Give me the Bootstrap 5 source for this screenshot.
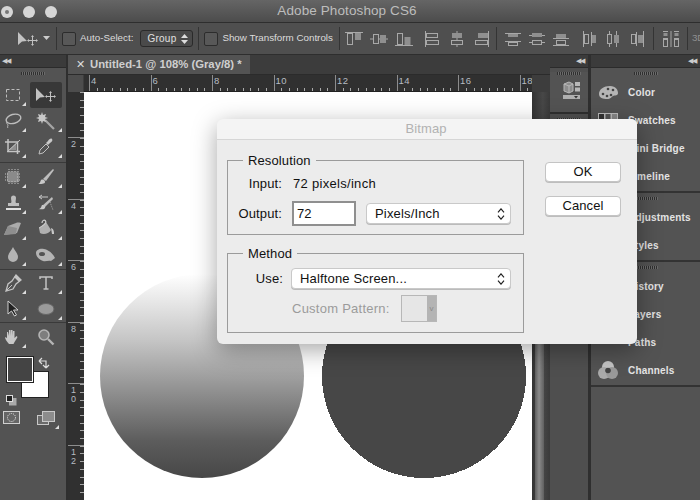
<!DOCTYPE html>
<html lang="en">
<head>
<meta charset="utf-8">
<title>Adobe Photoshop CS6</title>
<link rel="stylesheet" href="https://cdn.jsdelivr.net/npm/bootstrap@5.3.0/dist/css/bootstrap.min.css">
<style>
html,body{margin:0;background:#4b4b4b;}
body{width:700px;height:500px;overflow:hidden;position:relative;font-family:"Liberation Sans",Arial,sans-serif;color:#ddd;}
svg{display:block;flex:none;}
.ps-title{height:22px;background:linear-gradient(#656565,#4c4c4c);}
.ps-title-text{flex:1;text-align:center;font-size:13.5px;letter-spacing:.1px;color:#bdbdbd;padding-right:6px;line-height:22px;}
.ps-light{width:12px;height:12px;border-radius:50%;background:#d6d6d6;}
.ps-lights{position:absolute;left:1px;top:6px;gap:10px;}
.ps-dot{width:4px;height:4px;border-radius:50%;background:#777;margin:4px;}
.ps-opts{height:33px;background:#4f4f4f;border-top:1px solid #2e2e2e;border-bottom:1px solid #2e2e2e;padding-left:17px;font-size:9.8px;color:#dcdcdc;white-space:nowrap;}
.ps-vsep{width:1px;height:23px;background:#343434;flex:none;}
.ps-check{width:14px;height:14px;border:1px solid #2c2c2c;border-radius:2px;background:#585858;flex:none;}
.ps-sel{width:53px;height:17px;border:1px solid #2a2a2a;border-radius:3px;background:#4a4a4a;padding:0 0 0 6px;font-size:10px;line-height:15px;color:#e0e0e0;letter-spacing:.26px;flex:none;}
.ps-work{height:445px;}
.ps-tools{width:66px;background:#535353;flex:none;}
.ps-strip{height:13px;background:#3b3b3b;border-bottom:1px solid #2b2b2b;color:#ccc;font-size:7px;line-height:12px;letter-spacing:-1px;}
.ps-grip{height:3px;width:24px;margin:4px auto 0;background:repeating-linear-gradient(90deg,#2f2f2f 0 1px,#6b6b6b 1px 2px);}
.ps-toolgrp{display:grid;grid-template-columns:26px 32px;column-gap:4px;grid-auto-rows:26px;padding-left:0;}
.ps-toolgrp + .ps-toolgrp{border-top:1px solid #3a3a3a;}
.ps-tool{position:relative;display:flex;align-items:center;justify-content:center;}
.ps-tool.on{background:#383838;border-radius:2px;}
.ps-tool.fly::after{content:"";position:absolute;right:0;bottom:2px;border-style:solid;border-width:0 0 4px 4px;border-color:transparent transparent #ddd transparent;}
.ps-gap{width:2px;background:#2f2f2f;flex:none;}
.ps-doc{width:482px;flex:none;background:#3a3a3a;}
.ps-tabs{height:20px;background:#3c3c3c;border-bottom:1px solid #2b2b2b;}
.ps-tab{width:182px;background:#535353;font-size:11.3px;font-weight:700;color:#cfcfcf;line-height:19px;padding-left:8px;gap:5px;white-space:nowrap;}
.ps-x{font-size:11px;font-weight:400;color:#ddd;}
.ps-hrow{height:17px;background:#303030;}
.ps-corner{width:16px;flex:none;background:#4d4d4d;border-right:1px solid #3e3e3e;}
.ps-hrule{width:448px;flex:none;overflow:hidden;padding-left:5px;border-bottom:1px solid #222;background:repeating-linear-gradient(90deg,#aaa 0 1px,transparent 1px 7.69px) 5px bottom/100% 3px no-repeat;}
.ps-hcell{width:61.5px;flex:none;border-left:1px solid #8d8d8d;font-size:9.5px;line-height:12px;padding-left:1px;color:#b6bcc2;letter-spacing:.4px;}
.ps-hend{flex:1;background:#3d3d3d;}
.ps-body{flex:1;min-height:0;}
.ps-vrule{width:16px;flex:none;overflow:hidden;padding-top:45px;background:#303030 repeating-linear-gradient(180deg,#a5a5a5 0 1px,transparent 1px 7.69px) right 0/4px 100% no-repeat;}
.ps-vcell{height:61.5px;border-top:1px solid #8d8d8d;font-size:9px;line-height:9px;color:#b6bcc2;padding:2px 0 0 3px;}
.ps-canvas{width:448px;flex:none;background:#fff;padding:182px 0 0 16px;gap:18px;overflow:hidden;}
.ps-round{width:204px;height:204px;border-radius:50%;flex:none;}
.ps-grad{background:linear-gradient(#fff 0%,#c6c6c6 32%,#8f8f8f 58%,#5c5c5c 82%,#474747 100%);}
.ps-scroll{flex:1;background:linear-gradient(90deg,#333,#474747 60%,#3a3a3a);padding:40px 6px 0 3px;}
.ps-thumb{height:100%;background:linear-gradient(90deg,#5e5e5e,#8a8a8a 45%,#5f5f5f);}
.ps-col1{width:38px;flex:none;background:#4f4f4f;}
.ps-col2{flex:1;background:#535353;}
.ps-tile{height:42px;background:#535353;border-bottom:2px solid #2f2f2f;}
.ps-item{height:28px;padding-left:7px;gap:8px;font-size:10px;font-weight:700;letter-spacing:.2px;color:#e4e4e4;white-space:nowrap;}
.ps-ico{width:22px;flex:none;}
.ps-grp{border-bottom:2px solid #333;padding-bottom:1px;}
.ps-colors{position:relative;height:56px;margin-top:4px;}
.ps-fg,.ps-bg{position:absolute;width:26px;height:25px;}
.ps-bg{left:22px;top:18px;background:#fff;outline:1px solid #222;}
.ps-fg{left:7px;top:3px;background:#444;border:1px solid #fff;outline:1px solid #222;}
.ps-swap{position:absolute;left:38px;top:3px;}
.ps-def{position:absolute;left:6px;top:41px;}
.ps-modes{position:relative;height:20px;margin-top:1px;}
.ps-mask{position:absolute;left:3px;top:0;}
.ps-scr{position:absolute;left:37px;top:0;}
.ps-miniarr{position:absolute;left:55px;top:14px;border-style:solid;border-width:0 0 4px 4px;border-color:transparent transparent #ddd transparent;}
.ps-dialog{position:absolute;left:217px;top:119px;width:420px;height:225px;background:#ececec;border-radius:6px;box-shadow:0 6px 24px rgba(0,0,0,.35);color:#111;font-size:13px;letter-spacing:.12px;}
.ps-dhead{height:21px;line-height:20px;text-align:center;color:#b2b2b2;background:#f4f4f4;border-bottom:1px solid #d6d6d6;border-radius:6px 6px 0 0;font-size:13px;padding-right:2px;}
.ps-dmain{padding:13px 16px 0 10px;gap:21px;}
.ps-fset{border:1px solid #9b9b9b;padding:0;margin:0;width:297px;position:relative;}
.ps-fset legend{float:none;width:auto;font-size:13px;line-height:15px;margin:0 0 0 15px;padding:0 5px;color:#111;}
.ps-res{height:82px;margin-bottom:11px;}
.ps-meth{height:87px;}
.ps-lab{text-align:right;flex:none;}
.ps-btn{width:76px;height:20px;padding:0;font-size:13px;line-height:18px;color:#111;background:#fff;border:1px solid #c4c4c4;border-radius:4px;box-shadow:0 1px 0 #bdbdbd;letter-spacing:.12px;}
.ps-btnwrap{gap:13.500px;padding-top:9px;}
.ps-input{width:64px;height:25px;border:2px solid #8f8f8f;border-radius:0;padding:0 3px;font-size:13px;color:#111;background:#fff;box-shadow:none;letter-spacing:.12px;}
.ps-pick{height:21px;padding:0 20px 0 8px;font-size:13px;line-height:19px;color:#111;border:1px solid #c9c9c9;border-radius:4px;background-color:#fff;box-shadow:0 1px 0 #bbb;letter-spacing:.16px;background-image:url("data:image/svg+xml,%3csvg xmlns='http://www.w3.org/2000/svg' viewBox='0 0 9 14'%3e%3cpath d='M1 5l3.5-4L8 5M1 9l3.5 4L8 9' fill='none' stroke='%23222' stroke-width='1.4'/%3e%3c/svg%3e");background-position:right 5px center;background-size:8px 12px;}
.ps-dim{color:#9b9b9b;letter-spacing:.25px;}
.ps-patt{width:36px;height:27px;border:1px solid #b7b7b7;background:#e6e6e6;flex:none;}
.ps-pbar{width:9px;height:100%;margin-left:auto;background:#b4b4b4;color:#8a8a8a;font-size:8px;line-height:25px;text-align:center;}
</style>
</head>
<body>

<svg width="0" height="0" class="position-absolute">
<defs>
<symbol id="i-move" viewBox="0 0 22 16"><path d="M1 1v13l4-3.6 5-.4z" fill="#c2c2c2"/><path d="M15.500 5v9M11 9.500h9" stroke="#c2c2c2" fill="none"/><path d="M15.500 4l-1.500 2h3zM15.500 15l-1.500-2h3zM10 9.500l2-1.500v3zM21 9.500l-2-1.500v3z" fill="#c2c2c2"/></symbol>
<symbol id="al-v" viewBox="0 0 18 18"><path d="M0 2.500h18" stroke="#a8a8a8"/><rect x="2.500" y="3.500" width="5" height="11" fill="none" stroke="#a8a8a8"/><rect x="10" y="3" width="6" height="7" fill="#8f8f8f"/></symbol>
<symbol id="al-m" viewBox="0 0 18 18"><path d="M0 9h18" stroke="#a8a8a8"/><rect x="3.500" y="4.500" width="5" height="9" fill="#535353" stroke="#a8a8a8"/><rect x="10" y="5" width="6" height="8" fill="#8f8f8f"/></symbol>
<symbol id="al-b" viewBox="0 0 18 18"><path d="M0 15.500h18" stroke="#a8a8a8"/><rect x="2.500" y="3.500" width="5" height="11" fill="none" stroke="#a8a8a8"/><rect x="9.500" y="7" width="6" height="8" fill="#8f8f8f"/></symbol>
<symbol id="al-l" viewBox="0 0 18 18"><path d="M2.500 1v16" stroke="#a8a8a8"/><rect x="3.500" y="3.500" width="11" height="4" fill="#535353" stroke="#a8a8a8"/><rect x="3.500" y="10.500" width="12" height="4" fill="#535353" stroke="#a8a8a8"/></symbol>
<symbol id="al-c" viewBox="0 0 18 18"><path d="M9 1v16" stroke="#a8a8a8"/><rect x="4" y="3" width="10" height="5" fill="#8f8f8f"/><rect x="3.500" y="10.500" width="11" height="4" fill="#535353" stroke="#a8a8a8"/></symbol>
<symbol id="al-r" viewBox="0 0 18 18"><path d="M15.500 1v16" stroke="#a8a8a8"/><rect x="5" y="3" width="10" height="5" fill="#8f8f8f"/><rect x="2.500" y="10.500" width="12" height="4" fill="#535353" stroke="#a8a8a8"/></symbol>
<symbol id="d-t" viewBox="0 0 18 18"><path d="M1 3.500h16M1 11.500h16" stroke="#a8a8a8"/><rect x="4" y="4" width="10" height="3" fill="#8f8f8f"/><rect x="4.500" y="12.500" width="9" height="3" fill="none" stroke="#a8a8a8"/></symbol>
<symbol id="d-m" viewBox="0 0 18 18"><path d="M1 5.500h16M1 12.500h16" stroke="#a8a8a8"/><rect x="4" y="3" width="10" height="4" fill="#8f8f8f"/><rect x="4.500" y="10.500" width="9" height="4" fill="#535353" stroke="#a8a8a8"/></symbol>
<symbol id="d-b" viewBox="0 0 18 18"><path d="M1 8.500h16M1 15.500h16" stroke="#a8a8a8"/><rect x="4" y="4" width="10" height="4" fill="#8f8f8f"/><rect x="4.500" y="10.500" width="9" height="4" fill="none" stroke="#a8a8a8"/></symbol>
<symbol id="h-l" viewBox="0 0 18 18"><path d="M3.500 1v16M11.500 2v14" stroke="#a8a8a8"/><rect x="4.500" y="4.500" width="4" height="9" fill="none" stroke="#a8a8a8"/><rect x="12" y="5" width="4" height="8" fill="#8f8f8f"/></symbol>
<symbol id="h-c" viewBox="0 0 18 18"><path d="M5.500 1v16M12.500 1v16" stroke="#a8a8a8"/><rect x="3.500" y="4.500" width="4" height="9" fill="#535353" stroke="#a8a8a8"/><rect x="10" y="5" width="5" height="8" fill="#8f8f8f"/></symbol>
<symbol id="h-r" viewBox="0 0 18 18"><path d="M8.500 2v14M15.500 1v16" stroke="#a8a8a8"/><rect x="3.500" y="4.500" width="4" height="9" fill="none" stroke="#a8a8a8"/><rect x="10" y="5" width="5" height="8" fill="#8f8f8f"/></symbol>
</defs>
</svg>

<!-- title bar -->
<div class="ps-title d-flex">
  <div class="ps-title-text">Adobe Photoshop CS6</div>
</div>
<div class="ps-lights d-flex">
  <div class="ps-light"><div class="ps-dot"></div></div>
  <div class="ps-light"></div>
  <div class="ps-light"></div>
</div>

<!-- options bar -->
<div class="ps-opts d-flex align-items-center">
  <svg width="22" height="16"><use href="#i-move"/></svg>
  <svg width="8" height="5" style="margin-left:4px"><path d="M0 0h7l-3.500 4z" fill="#ccc"/></svg>
  <div class="ps-vsep" style="margin-left:5px"></div>
  <div class="ps-check" style="margin-left:5px"></div>
  <span class="ms-1">Auto-Select:</span>
  <div class="ps-sel d-flex align-items-center" style="margin-left:7px">Group
    <svg width="7" height="10" class="ms-auto me-1"><path d="M0 4l3.500-4 3.500 4zM0 6l3.500 4 3.500-4z" fill="#ddd"/></svg>
  </div>
  <div class="ps-vsep" style="margin-left:5px"></div>
  <div class="ps-check" style="margin-left:5px"></div>
  <span class="ms-1">Show Transform Controls</span>
  <div class="ps-vsep" style="margin-left:6px"></div>
  <div class="d-flex align-items-center" style="margin-left:5px;gap:7px">
    <svg width="18" height="18"><use href="#al-v"/></svg>
    <svg width="18" height="18"><use href="#al-m"/></svg>
    <svg width="18" height="18"><use href="#al-b"/></svg>
    <svg width="18" height="18" style="margin-left:3px"><use href="#al-l"/></svg>
    <svg width="18" height="18"><use href="#al-c"/></svg>
    <svg width="18" height="18"><use href="#al-r"/></svg>
  </div>
  <div class="ps-vsep" style="margin-left:5px"></div>
  <div class="d-flex align-items-center" style="margin-left:7px;gap:6px">
    <svg width="18" height="18"><use href="#d-t"/></svg>
    <svg width="18" height="18"><use href="#d-m"/></svg>
    <svg width="18" height="18"><use href="#d-b"/></svg>
    <svg width="18" height="18" style="margin-left:4px"><use href="#h-l"/></svg>
    <svg width="18" height="18"><use href="#h-c"/></svg>
    <svg width="18" height="18"><use href="#h-r"/></svg>
  </div>
  <div class="ps-vsep" style="margin-left:7px"></div>
  <svg width="18" height="18" style="margin-left:8px"><path d="M1 1.500h5M12 1.500h5M1 8.500h5M12 8.500h5" stroke="#a8a8a8"/><rect x="1.500" y="3" width="4" height="3" fill="#8f8f8f"/><rect x="12.500" y="3" width="4" height="3" fill="#8f8f8f"/><rect x="1.500" y="9.500" width="4" height="7" fill="none" stroke="#a8a8a8"/><rect x="12.500" y="9.500" width="4" height="7" fill="none" stroke="#a8a8a8"/><path d="M9 1v16" stroke="#a8a8a8"/></svg>
  <div class="ps-vsep" style="margin-left:7px"></div>
  <span style="margin-left:4px;color:#8f8f8f">3D</span>
</div>

<div class="ps-work d-flex">
  <!-- tools -->
  <div class="ps-tools">
    <div class="ps-strip" style="padding-left:2px">◀◀</div>
    <div class="ps-grip"></div>
    <div style="height:7px"></div>
    <div class="ps-toolgrp" style="padding-bottom:2px;">
      <div class="ps-tool fly"><svg width="16" height="16"><rect x="1.500" y="2.500" width="13" height="11" fill="none" stroke="#bdbdbd" stroke-dasharray="3 2"/></svg></div>
      <div class="ps-tool on"><svg width="22" height="16"><use href="#i-move"/></svg></div>
      <div class="ps-tool fly"><svg width="18" height="18"><ellipse cx="9.500" cy="7" rx="7.500" ry="4.500" fill="none" stroke="#bdbdbd" stroke-width="1.400" transform="rotate(-15 9 7)"/><path d="M3 10c-1 2 1 2 1 3s-1 2 0 3" fill="none" stroke="#bdbdbd"/></svg></div>
      <div class="ps-tool fly"><svg width="20" height="20"><path d="M9 9l9 9" stroke="#a5a5a5" stroke-width="2.200"/><path d="M6 1l1 3 3-1-1 3 3 1-3 1 1 3-3-1-1 3-1-3-3 1 1-3-3-1 3-1-1-3 3 1z" fill="#c8c8c8"/></svg></div>
      <div class="ps-tool fly"><svg width="18" height="18"><path d="M4 1v12.500h12M1 4h12.500v12" fill="none" stroke="#c4c4c4" stroke-width="1.500"/><path d="M5 12L12 5v7z" fill="#8f8f8f"/><path d="M3 14L16 2" stroke="#c4c4c4"/></svg></div>
      <div class="ps-tool fly"><svg width="18" height="18"><path d="M2 16l1-4 6-6 3 3-6 6z" fill="#535353" stroke="#c0c0c0"/><path d="M9 5l2-2c1-2 3-3 4-2s0 3-2 4l-2 2z" fill="#c8c8c8"/></svg></div>
    </div>
    <div class="ps-toolgrp" style="padding-top:1px;">
      <div class="ps-tool fly"><svg width="18" height="18"><rect x="3" y="3.500" width="12" height="11" rx="2" fill="#8a8a8a"/><path d="M5 1v4M8 1v4M11 1v4M14 1v4M5 13v4M8 13v4M11 13v4M14 13v4M1 6h4M1 9h4M1 12h4M13 6h4M13 9h4M13 12h4" stroke="#c4c4c4" stroke-dasharray="1 1"/></svg></div>
      <div class="ps-tool fly"><svg width="20" height="18"><path d="M7 11L17 1l1 1-8 11z" fill="#bdbdbd"/><path d="M1 16c3 0 3-2 4-4 2-1 4 0 4 2s-4 2-8 2z" fill="#c8c8c8"/></svg></div>
      <div class="ps-tool fly"><svg width="18" height="18"><path d="M7 9c1-1 0-3 0-5a2.500 2.500 0 015 0c0 2-1 4 0 5h3v3H4V9z" fill="#bdbdbd"/><path d="M2 15h15" stroke="#e0e0e0" stroke-width="2"/></svg></div>
      <div class="ps-tool fly"><svg width="20" height="18"><path d="M6 12L16 3l1 2-8 8z" fill="#bdbdbd"/><path d="M2 15c3 0 3-2 4-4 2 0 4 1 3 3s-4 1-7 1z" fill="#c8c8c8"/><path d="M3 3h9M3 3l3-2M3 3l3 2" fill="none" stroke="#c8c8c8"/><path d="M14 8l3 8" stroke="#aaa" stroke-dasharray="1 1"/></svg></div>
      <div class="ps-tool fly"><svg width="20" height="16"><path d="M1 14l4-9L13 2c2-1 5 0 5 0l-4 10z" fill="#ababab"/><path d="M5 5l9 2-1 6-12 1z" fill="#8e8e8e"/></svg></div>
      <div class="ps-tool fly"><svg width="20" height="20"><path d="M3 9l7-6 5 8c-2 4-8 5-11 3z" fill="#b0b0b0"/><path d="M3 9c3-2 6-3 7-6" fill="none" stroke="#d0d0d0"/><path d="M10 3c-1-3-4-2-4 1" fill="none" stroke="#d0d0d0" stroke-width="1.200"/><path d="M15 9c3 1 3 4 3 6h-2z" fill="#c8c8c8"/></svg></div>
      <div class="ps-tool fly"><svg width="14" height="18"><path d="M7 1c1 3 5 6 5 10a5 5 0 01-10 0c0-4 4-7 5-10z" fill="#b4b4b4"/></svg></div>
      <div class="ps-tool fly"><svg width="22" height="16"><path d="M1 6c0-3 4-5 8-4s8 3 11 9l-4 3c-3-1-5 1-8 0S1 10 1 6z" fill="#b4b4b4"/><ellipse cx="7" cy="7" rx="3" ry="2" fill="#535353"/></svg></div>
    </div>
    <div class="ps-toolgrp" style="margin-top:1px;">
      <div class="ps-tool fly"><svg width="18" height="18"><path d="M12 1l5 5-5 4-3 5-7 2 2-7 4-3z" fill="#535353" stroke="#c4c4c4" stroke-width="1.300"/><path d="M2 17l6-6" stroke="#c4c4c4"/><path d="M12 1l5 5-2 2-5-5z" fill="#c4c4c4"/></svg></div>
      <div class="ps-tool fly"><svg width="16" height="16"><path d="M2 4V2h12v2M8 2v12M5.500 14h5" fill="none" stroke="#c4c4c4" stroke-width="1.500"/></svg></div>
      <div class="ps-tool fly"><svg width="16" height="18"><path d="M3 1v13l3.500-3 3 5 2-1-3-5h4.500z" fill="#222" stroke="#d0d0d0"/></svg></div>
      <div class="ps-tool fly"><svg width="18" height="14"><ellipse cx="9" cy="7" rx="8" ry="5.500" fill="#9a9a9a" stroke="#666"/></svg></div>
    </div>
    <div class="ps-toolgrp" style="padding-top:1px;">
      <div class="ps-tool fly"><svg width="18" height="18"><path d="M5 16c-2-2-4-5-4-7l2 1V4h1l1 4V2h1.500l.500 6V2h1.500l.500 6V3h1.500v7l2-2 1 1c-1 2-3 5-4 7z" fill="#c8c8c8"/></svg></div>
      <div class="ps-tool"><svg width="18" height="18"><circle cx="7" cy="7" r="5" fill="#7e7e7e" stroke="#b5b5b5" stroke-width="1.600"/><path d="M11 11l5.500 5.500" stroke="#b5b5b5" stroke-width="2.400"/></svg></div>
    </div>
    <div class="ps-colors">
      <div class="ps-bg"></div>
      <div class="ps-fg"></div>
      <svg class="ps-swap" width="12" height="13"><path d="M1 4h7v6M1 4l3-3M1 4l3 3M8 11l-3-3M8 11l3-3" fill="none" stroke="#ddd" stroke-width="1.200"/></svg>
      <svg class="ps-def" width="11" height="11"><rect x="3" y="3" width="7.500" height="7.500" fill="#aaa"/><rect x=".5" y=".5" width="6" height="6" fill="#222" stroke="#ddd"/></svg>
    </div>
    <div class="ps-modes">
      <svg class="ps-mask" width="18" height="14"><rect x=".5" y=".5" width="16" height="12" fill="#666" stroke="#d0d0d0"/><circle cx="8.500" cy="6.500" r="4" fill="none" stroke="#eee" stroke-dasharray="1 1"/></svg>
      <svg class="ps-scr" width="18" height="15"><rect x=".5" y="4.500" width="11" height="9" fill="#6a6a6a" stroke="#c8c8c8"/><rect x="5.500" y=".5" width="12" height="10" fill="#8c8c8c" stroke="#c8c8c8"/></svg>
      <div class="ps-miniarr"></div>
    </div>
  </div>
  <div class="ps-gap"></div>

  <!-- document -->
  <div class="ps-doc d-flex flex-column">
    <div class="ps-tabs d-flex">
      <div class="ps-tab d-flex"><span class="ps-x">✕</span><span>Untitled-1 @ 108% (Gray/8) *</span></div>
    </div>
    <div class="ps-hrow d-flex">
      <div class="ps-corner"></div>
      <div class="ps-hrule d-flex">
        <div class="ps-hcell">4</div><div class="ps-hcell">6</div><div class="ps-hcell">8</div><div class="ps-hcell">10</div><div class="ps-hcell">12</div><div class="ps-hcell">14</div><div class="ps-hcell">16</div><div class="ps-hcell">18</div>
      </div>
      <div class="ps-hend"></div>
    </div>
    <div class="ps-body d-flex">
      <div class="ps-vrule">
        <div class="ps-vcell">2</div><div class="ps-vcell">4</div><div class="ps-vcell">6</div><div class="ps-vcell">8</div><div class="ps-vcell">1<br>0</div><div class="ps-vcell">1<br>2</div>
      </div>
      <div class="ps-canvas d-flex">
        <div class="ps-round ps-grad"></div>
        <svg width="204" height="204" viewBox="0 0 204 204"><circle cx="102" cy="102" r="102" fill="#474747" shape-rendering="crispEdges"/></svg>
      </div>
      <div class="ps-scroll"><div class="ps-thumb"></div></div>
    </div>
  </div>

  <!-- panel dock, icon column -->
  <div class="ps-col1">
    <div class="ps-strip text-end pe-1">◀◀</div>
    <div class="ps-tile">
      <div class="ps-grip"></div>
      <svg width="26" height="20" class="mx-auto" style="margin-top:6px"><path d="M8 3l5-2 4 2v7l-4 2-5-2z" fill="#8d8d8d" stroke="#b8b8b8"/><path d="M8 3l5 2 4-2M13 5v7" stroke="#b8b8b8" fill="none"/><rect x="19" y="1" width="5" height="4" fill="#b8b8b8"/><rect x="19" y="6.500" width="5" height="4" fill="#b8b8b8"/><rect x="7" y="14" width="17" height="4" fill="#b0b0b0"/><path d="M18 15h4l-2 2.500z" fill="#333"/></svg>
    </div>
    <div class="ps-grip"></div>
  </div>
  <div class="ps-gap" style="width:3px"></div>

  <div class="ps-col2">
    <div class="ps-strip text-end pe-1">◀◀</div>
    <div class="ps-grp">
      <div class="ps-grip"></div>
      <div style="height:3px"></div>
      <div class="ps-item d-flex align-items-center"><span class="ps-ico"><svg width="21" height="15"><path d="M1 9c0-5 5-8 11-8s8 4 8 7-3 2-5 3-2 3-6 3-8-1-8-5z" fill="#b5b5b5"/><circle cx="5" cy="9" r="1.300" fill="#444"/><circle cx="9" cy="11" r="1.300" fill="#444"/><circle cx="13" cy="10" r="1.300" fill="#444"/><circle cx="15" cy="5" r="1.300" fill="#444"/><circle cx="10" cy="4" r="1.300" fill="#444"/></svg></span>Color</div>
      <div class="ps-item d-flex align-items-center"><span class="ps-ico"><svg width="20" height="14"><rect width="20" height="14" fill="#bbb"/><rect x="1" y="1" width="5" height="6" fill="#333"/><rect x="7.500" y="1" width="5" height="6" fill="#555"/><rect x="14" y="1" width="5" height="6" fill="#888"/></svg></span>Swatches</div>
      <div class="ps-item d-flex align-items-center"><span class="ps-ico"><svg width="20" height="14"><rect width="20" height="14" fill="#999"/></svg></span>Mini Bridge</div>
      <div class="ps-item d-flex align-items-center"><span class="ps-ico"><svg width="20" height="14"><rect width="20" height="14" fill="#999"/></svg></span>Timeline</div>
    </div>
    <div class="ps-grp">
      <div class="ps-grip"></div>
      <div style="height:3px"></div>
      <div class="ps-item d-flex align-items-center"><span class="ps-ico"><svg width="20" height="14"><rect width="20" height="14" fill="#999"/></svg></span>Adjustments</div>
      <div class="ps-item d-flex align-items-center"><span class="ps-ico"><svg width="20" height="14"><rect width="20" height="14" fill="#999"/></svg></span>Styles</div>
    </div>
    <div class="ps-grp">
      <div class="ps-grip"></div>
      <div style="height:3px"></div>
      <div class="ps-item d-flex align-items-center"><span class="ps-ico"><svg width="20" height="14"><rect width="20" height="14" fill="#999"/></svg></span>History</div>
      <div class="ps-item d-flex align-items-center"><span class="ps-ico"><svg width="20" height="14"><rect width="20" height="14" fill="#999"/></svg></span>Layers</div>
      <div class="ps-item d-flex align-items-center"><span class="ps-ico"><svg width="20" height="16"><rect x="4.500" y="1" width="3" height="3" fill="none" stroke="#bbb"/><rect x="17" y="1" width="3" height="3" fill="none" stroke="#bbb"/></svg></span>Paths</div>
      <div class="ps-item d-flex align-items-center"><span class="ps-ico"><svg width="20" height="18"><circle cx="10" cy="6" r="6" fill="#c4c4c4"/><circle cx="6" cy="12" r="6" fill="#ababab"/><circle cx="14" cy="12" r="6" fill="#9a9a9a"/><circle cx="10" cy="9.500" r="2.800" fill="#444"/></svg></span>Channels</div>
    </div>
  </div>
</div>

<!-- Bitmap dialog -->
<div class="ps-dialog">
  <div class="ps-dhead">Bitmap</div>
  <div class="ps-dmain d-flex">
    <div>
      <fieldset class="ps-fset ps-res">
        <legend>Resolution</legend>
        <div class="d-flex align-items-center" style="margin-top:8px;height:16px"><span class="ps-lab" style="width:54px">Input:</span><span style="margin-left:11px;letter-spacing:.3px">72 pixels/inch</span></div>
        <div class="d-flex align-items-center" style="margin-top:9px">
          <span class="ps-lab" style="width:54px">Output:</span>
          <input class="form-control ps-input" style="margin-left:10px" value="72" aria-label="Output">
          <select class="form-select ps-pick" style="width:145px;margin-left:10px" aria-label="Unit"><option>Pixels/Inch</option></select>
        </div>
      </fieldset>
      <fieldset class="ps-fset ps-meth">
        <legend>Method</legend>
        <div class="d-flex align-items-center" style="margin-top:7px">
          <span class="ps-lab" style="width:55px">Use:</span>
          <select class="form-select ps-pick" style="width:220px;margin-left:8px" aria-label="Use"><option>Halftone Screen...</option></select>
        </div>
        <div class="d-flex align-items-center" style="margin-top:6px">
          <span class="ps-dim" style="margin-left:64px">Custom Pattern:</span>
          <div class="ps-patt d-flex ms-auto" style="margin-right:86px"><div class="ps-pbar">v</div></div>
        </div>
      </fieldset>
    </div>
    <div class="ps-btnwrap d-flex flex-column">
      <button class="btn ps-btn" type="button">OK</button>
      <button class="btn ps-btn" type="button">Cancel</button>
    </div>
  </div>
</div>

</body>
</html>
